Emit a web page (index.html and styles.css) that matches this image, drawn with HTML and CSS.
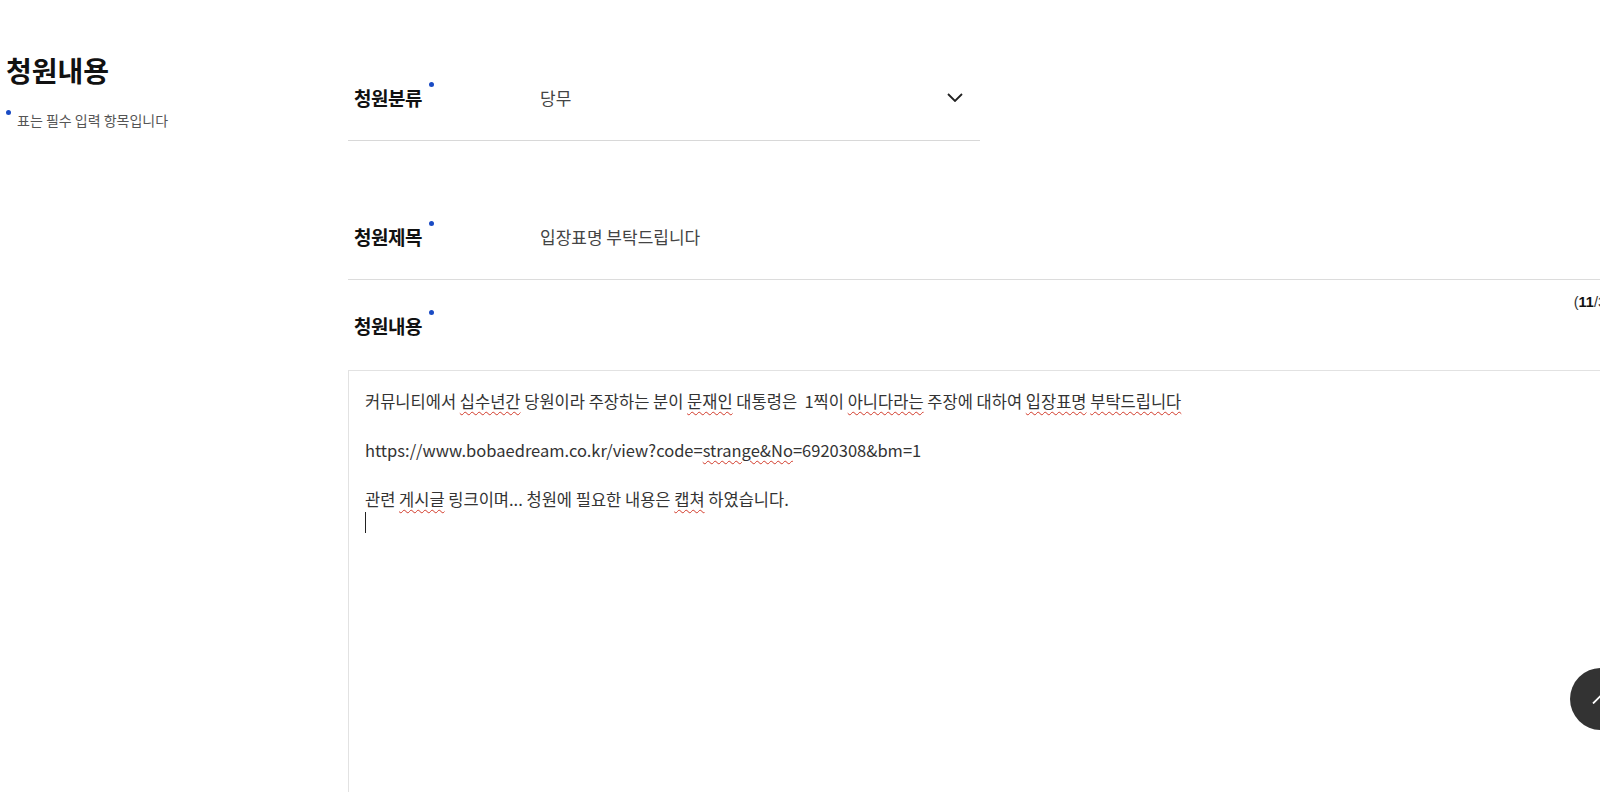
FILE: index.html
```html
<html>
<head>
    <link rel="stylesheet" href="styles.css">
</head>
<body>
    <div class="page">
        <div class="side">
            <h1>청원내용</h1>
            <p class="guide"><span class="dot"></span>표는 필수 입력 항목입니다</p>
        </div>
        <div class="form">
            <div class="row row-select">
                <label class="label">청원분류<span class="dot"></span></label>
                <div class="value">당무</div>
                <svg class="chevron" width="16" height="9" viewBox="0 0 16 9">
                    <path d="M1 1 L8 8 L15 1" fill="none" stroke="#222" stroke-width="1.8"/>
                </svg>
            </div>
            <div class="row row-title">
                <label class="label">청원제목<span class="dot"></span></label>
                <div class="value">입장표명 부탁드립니다</div>
            </div>
            <div class="row row-content">
                <label class="label">청원내용<span class="dot"></span></label>
                <div class="counter">(<b>11</b>/3000)</div>
            </div>
            <div class="textbox">
                <p>커뮤니티에서 <span class="spell">십수년간</span> 당원이라 주장하는 분이 <span class="spell">문재인</span> 대통령은&nbsp; 1찍이 <span class="spell">아니다라는</span> 주장에 대하여 <span class="spell">입장표명</span> <span class="spell">부탁드립니다</span></p>
                <p>&nbsp;</p>
                <p>https://www.bobaedream.co.kr/view?code=<span class="spell">strange&amp;No</span>=6920308&amp;bm=1</p>
                <p>&nbsp;</p>
                <p>관련 <span class="spell">게시글</span> 링크이며... 청원에 필요한 내용은 <span class="spell">캡쳐</span> 하였습니다.</p>
                <p><span class="caret"></span></p>
            </div>
        </div>
    </div>
    <button class="top-btn">
        <svg width="18" height="10" viewBox="0 0 18 10">
            <path d="M1 9.5 L9 1.5 L17 9.5" fill="none" stroke="#fff" stroke-width="1.8"/>
        </svg>
    </button>
</body>
</html>
```

FILE: styles.css
```css
html, body {
    margin: 0;
    padding: 0;
    overflow: hidden;
    background-color: #fff;
}

body {
    font-family: "Noto Sans CJK KR", "Noto Sans", sans-serif;
    color: #111;
    width: 1600px;
    height: 792px;
    position: relative;
}

.page {
    display: flex;
    width: 1640px;
}

.side {
    width: 348px;
    flex-shrink: 0;
    padding-top: 50px;
    box-sizing: border-box;
}

h1 {
    margin: 0 0 0 6px;
    font-size: 28px;
    font-weight: 700;
    line-height: 40px;
}

.guide {
    margin: 20px 0 0 6px;
    font-size: 14px;
    color: #555;
    line-height: 20px;
}

.dot {
    display: inline-block;
    width: 5px;
    height: 5px;
    border-radius: 50%;
    background-color: #1a4bc4;
    vertical-align: top;
}

.guide .dot {
    margin: 0 6px 0 0;
}

.form {
    width: 1287px;
    flex-shrink: 0;
}

.row {
    display: flex;
    align-items: center;
    box-sizing: border-box;
}

.label {
    width: 192px;
    flex-shrink: 0;
    padding-left: 6px;
    box-sizing: border-box;
    font-size: 19px;
    font-weight: 700;
    letter-spacing: -0.5px;
    color: #111;
}

.label .dot {
    margin: -2px 0 0 7px;
}

.value {
    font-size: 17px;
    color: #444;
    flex: 1;
}

.row-select {
    width: 632px;
    height: 87px;
    margin-top: 54px;
    border-bottom: 1px solid #d8d8d8;
}

.chevron {
    margin-right: 17px;
}

.row-title {
    height: 87px;
    margin-top: 52px;
    border-bottom: 1px solid #dcdcdc;
}

.row-content {
    height: 90px;
    justify-content: space-between;
}

.counter {
    align-self: flex-start;
    margin-top: 14px;
    font-family: "Liberation Sans", sans-serif;
    font-size: 14.5px;
    color: #333;
}

.counter b {
    color: #111;
}

.textbox {
    border: 1px solid #e2e2e2;
    border-right: none;
    min-height: 500px;
    padding: 18px 16px;
    font-size: 16.5px;
    color: #333;
}

.textbox p {
    margin: 0;
    line-height: 24.5px;
    white-space: nowrap;
}

.spell {
    text-decoration: underline wavy #d23a2a;
    text-decoration-thickness: 1px;
    text-underline-offset: 3px;
}

.caret {
    display: inline-block;
    width: 1px;
    height: 21px;
    background-color: #222;
    vertical-align: middle;
}

.top-btn {
    position: absolute;
    left: 1570px;
    top: 668px;
    width: 62px;
    height: 62px;
    border: none;
    border-radius: 50%;
    background-color: #333;
    padding: 0;
    display: flex;
    align-items: center;
    justify-content: center;
    cursor: pointer;
}
```
